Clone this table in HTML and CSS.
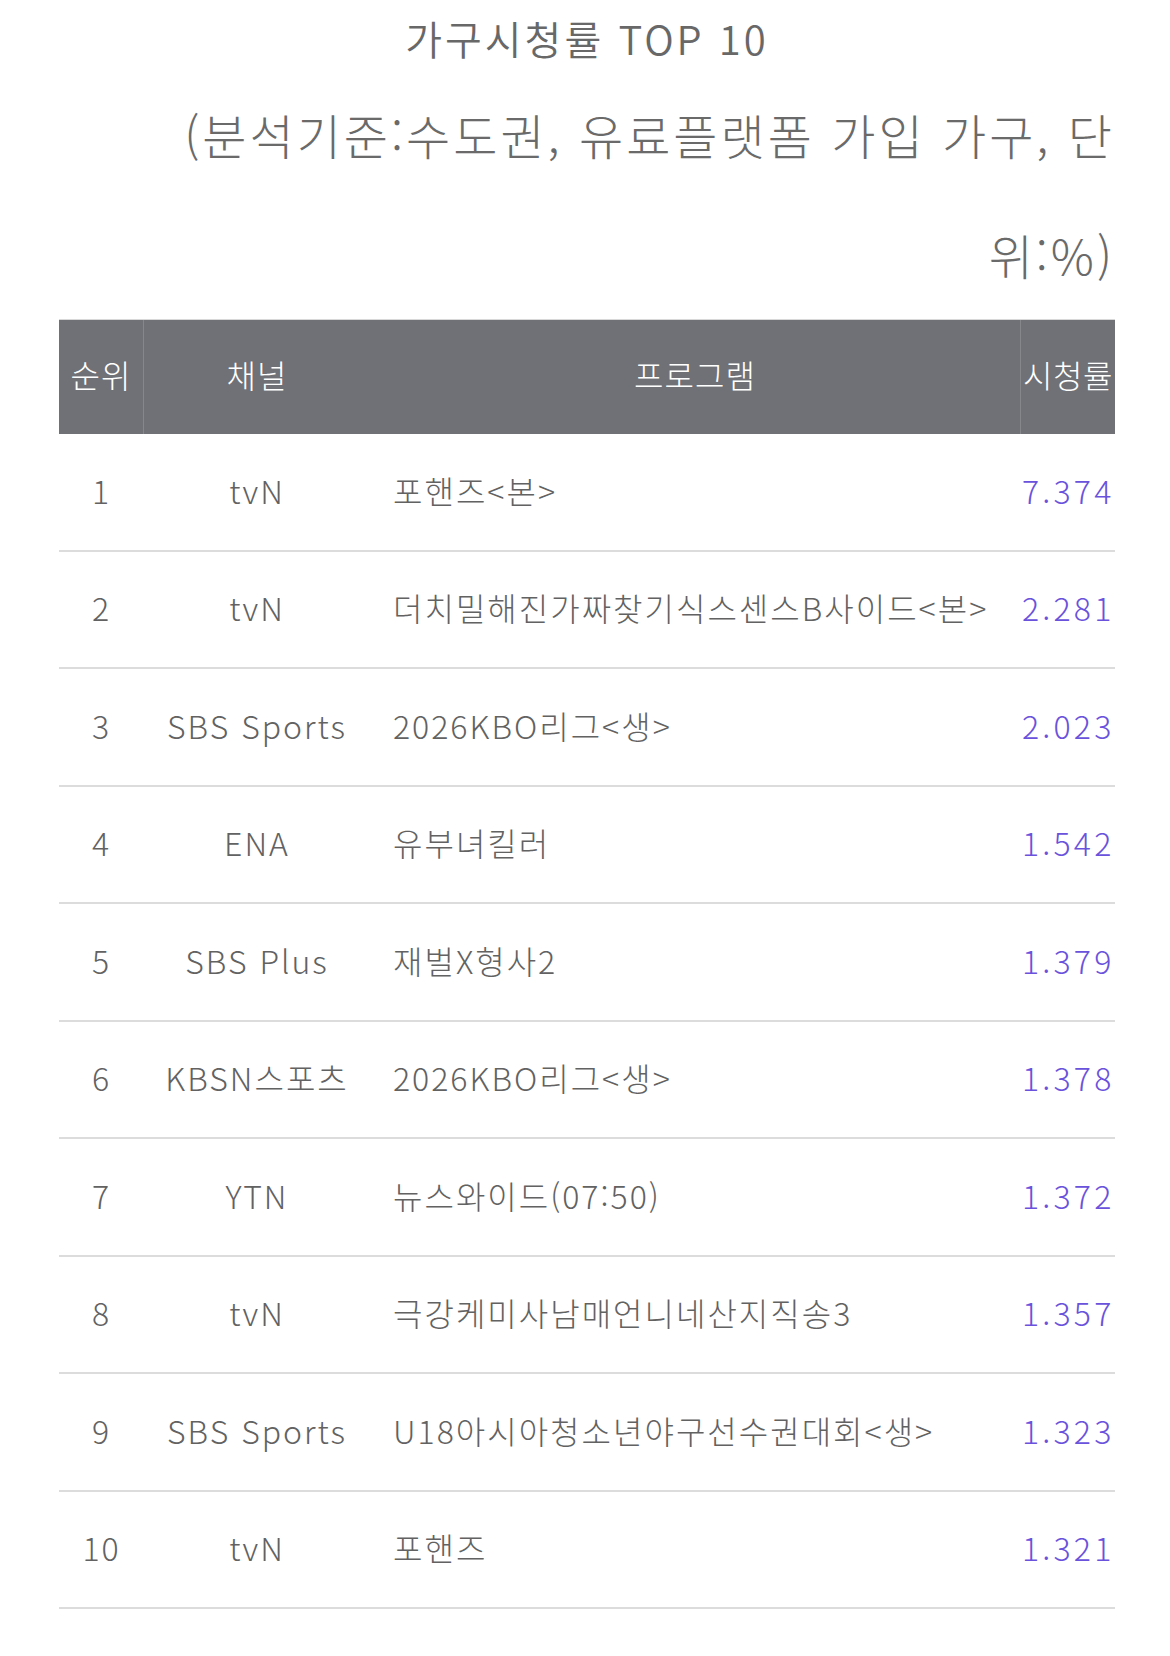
FILE: index.html
```html
<!DOCTYPE html>
<html lang="ko">
<head>
<meta charset="utf-8">
<title>가구시청률 TOP 10</title>
<link rel="stylesheet" href="styles.css">
</head>
<body>
<div class="page">
  <h1 class="title">가구시청률 TOP 10</h1>
  <p class="subtitle">(분석기준:수도권, 유료플랫폼 가입 가구, 단<br>위:%)</p>
  <div class="table">
    <div class="row head">
      <div class="cell rank">순위</div>
      <div class="cell channel">채널</div>
      <div class="cell program">프로그램</div>
      <div class="cell rating">시청률</div>
    </div>
    <div class="row"><div class="cell rank">1</div><div class="cell channel">tvN</div><div class="cell program">포핸즈&lt;본&gt;</div><div class="cell rating">7.374</div></div>
    <div class="row"><div class="cell rank">2</div><div class="cell channel">tvN</div><div class="cell program">더치밀해진가짜찾기식스센스B사이드&lt;본&gt;</div><div class="cell rating">2.281</div></div>
    <div class="row"><div class="cell rank">3</div><div class="cell channel">SBS Sports</div><div class="cell program">2026KBO리그&lt;생&gt;</div><div class="cell rating">2.023</div></div>
    <div class="row"><div class="cell rank">4</div><div class="cell channel">ENA</div><div class="cell program">유부녀킬러</div><div class="cell rating">1.542</div></div>
    <div class="row"><div class="cell rank">5</div><div class="cell channel">SBS Plus</div><div class="cell program">재벌X형사2</div><div class="cell rating">1.379</div></div>
    <div class="row"><div class="cell rank">6</div><div class="cell channel">KBSN스포츠</div><div class="cell program">2026KBO리그&lt;생&gt;</div><div class="cell rating">1.378</div></div>
    <div class="row"><div class="cell rank">7</div><div class="cell channel">YTN</div><div class="cell program">뉴스와이드(07:50)</div><div class="cell rating">1.372</div></div>
    <div class="row"><div class="cell rank">8</div><div class="cell channel">tvN</div><div class="cell program">극강케미사남매언니네산지직송3</div><div class="cell rating">1.357</div></div>
    <div class="row"><div class="cell rank">9</div><div class="cell channel">SBS Sports</div><div class="cell program">U18아시아청소년야구선수권대회&lt;생&gt;</div><div class="cell rating">1.323</div></div>
    <div class="row"><div class="cell rank">10</div><div class="cell channel">tvN</div><div class="cell program">포핸즈</div><div class="cell rating">1.321</div></div>
  </div>
</div>
</body>
</html>
```
FILE: styles.css
```css
html, body {
  margin: 0;
  padding: 0;
  background: #ffffff;
}
body {
  font-family: "Noto Sans CJK KR", "Noto Sans", sans-serif;
  font-weight: 300;
  color: #626262;
}
.page {
  padding: 0 55px 0 59px;
}
.title {
  margin: 0;
  font-size: 40px;
  font-weight: 350;
  line-height: 76px;
  letter-spacing: 3px;
  text-align: center;
  color: #686868;
}
.subtitle {
  margin: -2px 0 0 0;
  font-size: 48px;
  line-height: 120px;
  letter-spacing: 3px;
  text-align: right;
  color: #6a6a6a;
}
.table {
  margin-top: 5px;
  font-size: 32px;
  letter-spacing: 2px;
}
.row {
  display: flex;
  align-items: center;
  height: 115.5px;
  border-bottom: 2px solid #dcdcdc;
}
.row > .cell {
  padding-bottom: 4px;
}
.row.head {
  height: 114px;
  border-bottom: 0;
  border-top: 1px solid #d8d8d8;
  background: #707176;
  color: #ffffff;
  align-items: stretch;
  letter-spacing: 1px;
}
.row.head > .cell {
  padding-bottom: 6px;
}
.cell {
  display: flex;
  align-items: center;
  white-space: nowrap;
  height: 100%;
  box-sizing: border-box;
}
.rank {
  width: 85px;
  justify-content: center;
}
.channel {
  width: 226px;
  justify-content: center;
}
.program {
  width: 650px;
  padding-left: 23px;
}
.rating {
  flex: 1;
  min-width: 0;
  padding-left: 2px;
  letter-spacing: 3.2px;
  color: #6a52dc;
}
.head .rank {
  border-right: 1px solid #86878b;
}
.head .program {
  justify-content: center;
  padding-left: 0;
}
.head .rating {
  border-left: 1px solid #86878b;
  letter-spacing: 0.5px;
  color: #ffffff;
}
```
